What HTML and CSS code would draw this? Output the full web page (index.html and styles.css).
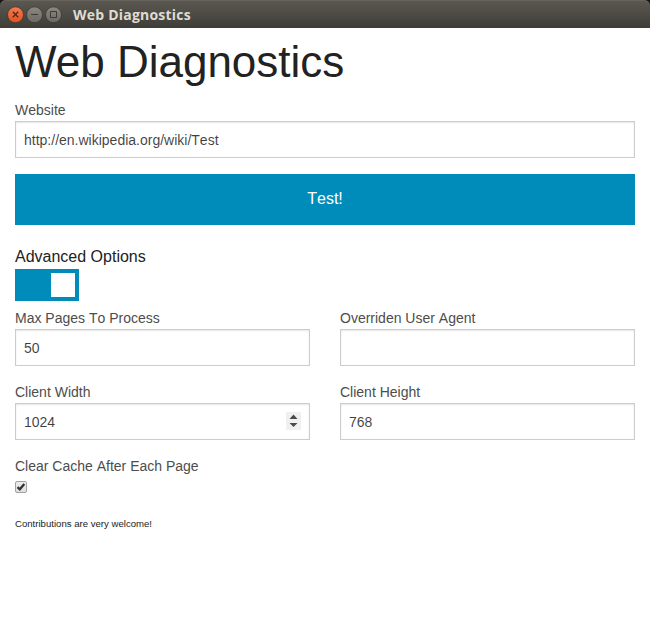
FILE: index.html
```html
<!DOCTYPE html>
<html lang="en">
<head>
<meta charset="utf-8">
<title>Web Diagnostics</title>
<link rel="stylesheet" href="styles.css">
</head>
<body>
<header class="titlebar">
  <div class="titlebar-inner">
    <svg class="controls" width="56" height="18" viewBox="0 0 56 18" aria-hidden="true">
      <defs>
        <linearGradient id="close" x1="0" y1="0" x2="0" y2="1"><stop offset="0" stop-color="#f67b52"/><stop offset="1" stop-color="#e5501b"/></linearGradient>
        <linearGradient id="plain" x1="0" y1="0" x2="0" y2="1"><stop offset="0" stop-color="#8b8982"/><stop offset="1" stop-color="#6a6861"/></linearGradient>
      </defs>
      <g stroke="#393832" stroke-width=".8">
        <circle cx="8.5" cy="8.8" r="8" fill="url(#close)"/>
        <circle cx="27.5" cy="8.8" r="8" fill="url(#plain)"/>
        <circle cx="46.5" cy="8.8" r="8" fill="url(#plain)"/>
      </g>
      <g fill="none" stroke="#3c3b37" stroke-width="1">
        <path d="M5.8 5.8l5.4 5.4M11.2 5.8L5.8 11.2" stroke="#4a2a1f" stroke-width="1.3"/>
        <path d="M24 8.5h7"/>
        <path d="M43.5 5.5h6v6h-6z"/>
      </g>
    </svg>
    <span class="window-title">Web Diagnostics</span>
  </div>
</header>
<main class="content">
  <h1>Web Diagnostics</h1>
  <label class="field">Website<input type="text" value="http://en.wikipedia.org/wiki/Test"></label>
  <button class="button" type="button">Test!</button>
  <p class="section-title">Advanced Options</p>
  <div class="switch"><span class="knob"></span></div>
  <div class="grid">
    <label class="field">Max Pages To Process<input type="text" value="50"></label>
    <label class="field">Overriden User Agent<input type="text" value=""></label>
    <label class="field">Client Width
      <span class="number">
        <input type="text" value="1024">
        <svg class="spinner" width="15" height="18" viewBox="0 0 15 18" aria-hidden="true"><path fill="#f0f0f0" d="M0 0h15v18H0z"/><path fill="#4b4b4b" d="M3.5 7l4-4.5 4 4.5zM3.5 11l4 4 4-4z"/></svg>
      </span>
    </label>
    <label class="field">Client Height<input type="text" value="768"></label>
  </div>
  <label class="cache">Clear Cache After Each Page
    <svg class="check" width="12" height="12" viewBox="0 0 12 12" aria-hidden="true">
      <defs><linearGradient id="box" x1="0" y1="0" x2="0" y2="1"><stop offset="0" stop-color="#ededed"/><stop offset="1" stop-color="#dedede"/></linearGradient></defs>
      <rect x=".5" y=".5" width="11" height="11" rx="1.5" fill="url(#box)" stroke="#a2a2a2"/>
      <path d="M2.5 6.2l2.3 2.1 4.5-5.4" fill="none" stroke="#333" stroke-width="2.3"/>
    </svg>
  </label>
  <p class="note">Contributions are very welcome!</p>
</main>
</body>
</html>
```
FILE: styles.css
```css
* {
  box-sizing: border-box;
}

body {
  margin: 0;
  background: #fff;
  color: #222;
  font: 16px/24px "Liberation Sans", Arial, sans-serif;
}

.titlebar {
  height: 28px;
  background: #1c1518;
}

.titlebar-inner {
  display: flex;
  align-items: center;
  height: 28px;
  padding: 1px 0 0 7px;
  border-radius: 6px 6px 0 0;
  background: linear-gradient(#5b5951, #3e3d38);
  box-shadow: inset 0 1px #66645c;
}

.controls {
  display: block;
}

.window-title {
  margin-left: 10px;
  color: #dfdbd2;
  font: bold 14px/20px "Open Sans", "Noto Sans", sans-serif;
  letter-spacing: 0.22px;
}

.content {
  padding: 3px 15px 0;
}

h1 {
  margin: 0 0 7px;
  font-size: 44px;
  font-weight: 400;
  line-height: 62px;
}

.field,
.cache {
  display: block;
  color: #4d4d4d;
  font-size: 14px;
  line-height: 21px;
  font-kerning: none;
}

.field input {
  display: block;
  width: 100%;
  height: 37px;
  margin: 0 0 16px;
  padding: 8px;
  border: 1px solid #ccc;
  border-radius: 0;
  background: #fff;
  box-shadow: inset 0 1px 2px rgba(0, 0, 0, 0.1);
  color: rgba(0, 0, 0, 0.75);
  font: 14px "Liberation Sans", Arial, sans-serif;
  font-kerning: none;
}

.button {
  display: block;
  width: 100%;
  height: 51px;
  margin: 0 0 20px;
  padding: 0 0 2px;
  border: 0;
  background: #008cba;
  color: #fff;
  font: 16px "Liberation Sans", Arial, sans-serif;
  font-kerning: none;
}

.section-title {
  margin: 0;
}

.switch {
  display: flex;
  justify-content: flex-end;
  width: 64px;
  height: 32px;
  margin-bottom: 7px;
  padding: 4px;
  background: #008cba;
}

.knob {
  width: 24px;
  height: 24px;
  background: #fff;
}

.grid {
  display: grid;
  grid-template-columns: 1fr 1fr;
  column-gap: 30px;
}

.number {
  display: block;
  position: relative;
}

.spinner {
  position: absolute;
  top: 9px;
  right: 9px;
}

.check {
  display: block;
  margin-top: 4px;
}

.note {
  margin: 19px 0 0;
  font-size: 9.6px;
  line-height: 24px;
}
```
